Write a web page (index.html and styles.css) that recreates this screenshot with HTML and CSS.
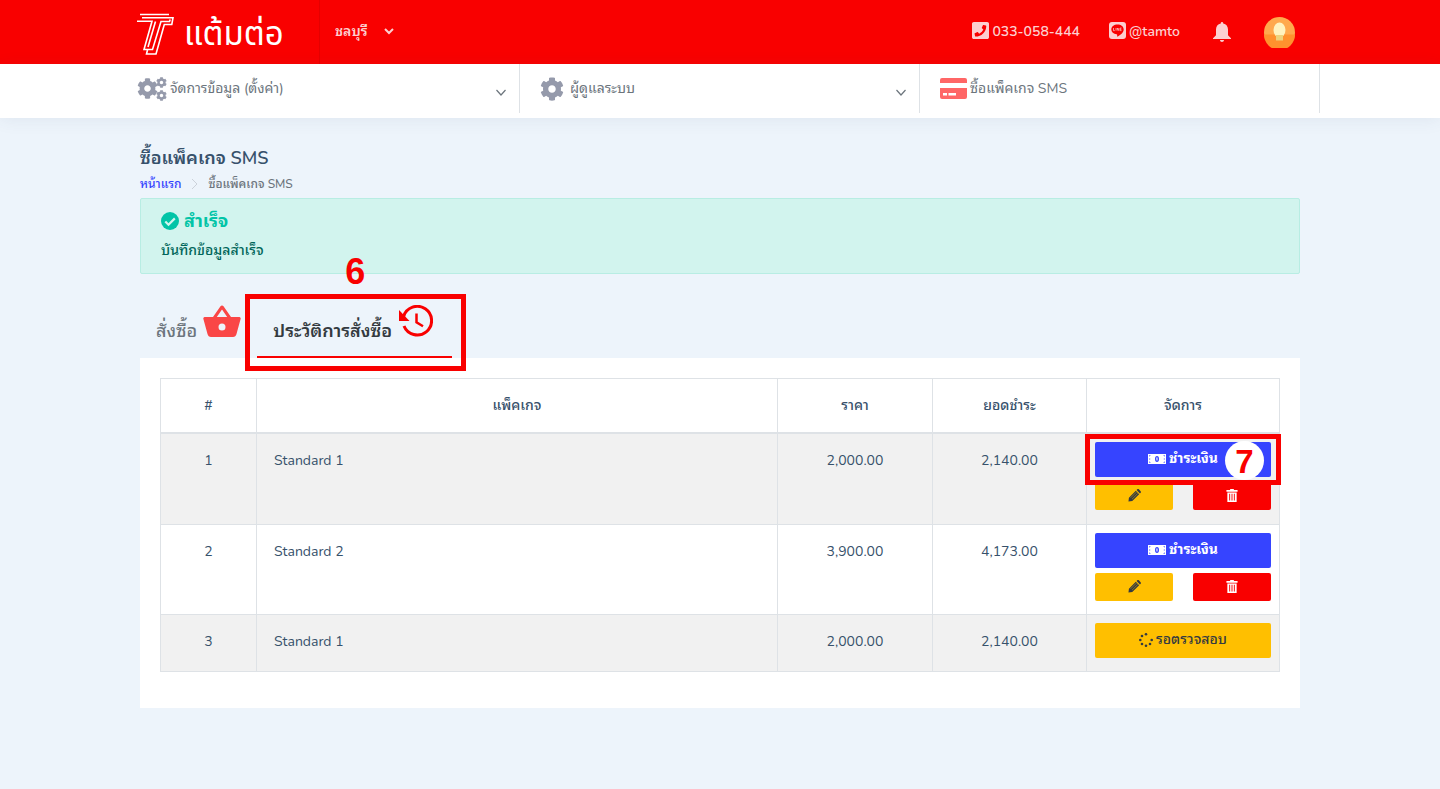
FILE: index.html
```html
<!DOCTYPE html>
<html lang="th">
<head>
<meta charset="utf-8">
<meta name="viewport" content="width=device-width, initial-scale=1">
<title>ซื้อแพ็คเกจ SMS</title>
<link rel="stylesheet" href="styles.css">
</head>
<body>
<svg class="defs" aria-hidden="true">
  <symbol id="cog" viewBox="0 0 512 512"><path d="M487.4 315.7l-42.600-24.600c4.300-23.200 4.300-47 0-70.200l42.600-24.600c4.900-2.800 7.100-8.600 5.500-14-11.100-35.600-30-67.800-54.700-94.600-3.800-4.100-10-5.100-14.800-2.300L380.800 110c-17.900-15.400-38.500-27.300-60.800-35.100V25.800c0-5.600-3.900-10.500-9.400-11.700-36.700-8.200-74.300-7.800-109.200 0-5.500 1.200-9.400 6.100-9.400 11.700V75c-22.200 7.900-42.800 19.800-60.800 35.100L88.700 85.500c-4.900-2.800-11-1.900-14.800 2.300-24.700 26.700-43.600 58.900-54.700 94.600-1.700 5.400.6 11.200 5.500 14L67.300 221c-4.300 23.200-4.300 47 0 70.200l-42.600 24.600c-4.900 2.800-7.100 8.600-5.500 14 11.100 35.600 30 67.800 54.700 94.600 3.800 4.100 10 5.100 14.800 2.300l42.600-24.600c17.900 15.400 38.500 27.300 60.800 35.100v49.200c0 5.600 3.900 10.500 9.400 11.700 36.700 8.200 74.300 7.800 109.200 0 5.500-1.200 9.400-6.100 9.400-11.700v-49.200c22.200-7.900 42.800-19.800 60.800-35.100l42.600 24.600c4.900 2.800 11 1.900 14.800-2.300 24.700-26.700 43.600-58.900 54.700-94.600 1.500-5.500-.7-11.300-5.600-14.100zM256 336c-44.100 0-80-35.900-80-80s35.900-80 80-80 80 35.900 80 80-35.900 80-80 80z"/></symbol>
  <symbol id="cash" viewBox="0 0 18 10"><path fill-rule="evenodd" d="M0 0h18v10H0zM1.200 1.200v1.600l1.600-1.600zM15.200 1.200l1.600 1.600V1.200zM1.200 7.200v1.600h1.600zM16.800 7.200l-1.600 1.600h1.600zM1.200 4.400v1.200h1V4.400zM15.800 4.400v1.200h1V4.400zM9 2a2 3 0 1 0 0 6 2 3 0 0 0 0-6zM8.300 3.500h1.200v3h-1z"/></symbol>
  <symbol id="pencil" viewBox="0 0 14 14"><path d="M1 9.400 8.400 2l3.600 3.600L4.600 13 .5 13.500zM9.200 1.200l.8-.8c.5-.5 1.200-.5 1.700 0l1.900 1.900c.5.500.5 1.200 0 1.700l-.8.800z"/><path d="m2.800 9.500 6.200-6.200M4.300 11l6.200-6.200" stroke="#ffbf00" stroke-width=".5"/></symbol>
  <symbol id="trash" viewBox="0 0 12 14"><path fill-rule="evenodd" d="M4 0h4v1.200h4V3H0V1.200h4zM1 3.800h10V14H1zM3 5v7.500h1V5zm2.500 0v7.500h1V5zM8 5v7.500h1V5z"/></symbol>
</svg>

<header class="topbar">
  <div class="wrap topbar-row">
    <a class="brand" href="#" aria-label="แต้มต่อ">
      <svg class="brand-mark" viewBox="0 0 39 43" aria-hidden="true"><g fill="none" stroke="#fff" stroke-width="1.600"><path d="M4 1.500h29M6 4.800h31l-1.200 6.700h-7.500L20 41h-9.500l1-4"/><path d="M1 8.300h15L8 36.500h8.500l8.500-28h8.500l.7-2"/><path d="M19.500 8.500 12 34"/></g></svg>
      <span class="brand-name">แต้มต่อ</span>
    </a>
    <button class="branch" type="button">ชลบุรี
      <svg viewBox="0 0 10 7" width="10" height="7" aria-hidden="true"><path d="m1 1 4 4 4-4" fill="none" stroke="currentColor" stroke-width="2"/></svg>
    </button>
    <nav class="contact" aria-label="ติดต่อ">
      <a class="phone" href="tel:033058444"><svg viewBox="0 0 448 448" width="17" height="17" aria-hidden="true"><path fill="currentColor" fill-rule="evenodd" d="M400 0H48C21.500 0 0 21.500 0 48v352c0 26.500 21.500 48 48 48h352c26.500 0 48-21.500 48-48V48c0-26.500-21.500-48-48-48zM94 384c-6 0-11-4-12-9l-15-65c-1-6 1-11 7-14l70-30c5-2 11-1 14 4l31 37c49-23 87-63 110-109l-37-31c-4-3-6-9-4-14l30-70c2-5 8-8 14-7l65 15c5 1 9 6 9 12 0 160-129 281-282 281z"/></svg>033-058-444</a>
      <a class="line" href="#"><svg viewBox="0 0 17 17" width="17" height="17" aria-hidden="true"><rect width="17" height="17" rx="3" fill="currentColor"/><path fill="#f90000" d="M8.500 2.500c-3.500 0-6.200 2.100-6.200 4.900 0 2.500 2.200 4.500 5.300 4.900.7.100.7.700.5 1.900 0 .3.300.4.700.2 3-1.700 5.900-4.300 5.900-7 0-2.800-2.700-4.900-6.200-4.900z"/><path d="M4.500 6v2.600h1.300M7 6v2.600M8.300 8.600V6l1.500 2.600V6M12.500 6h-1.300v2.600h1.300M11.200 7.300h1.200" fill="none" stroke="currentColor" stroke-width=".7"/></svg>@tamto</a>
      <button class="bell" type="button" aria-label="การแจ้งเตือน"><svg viewBox="0 0 18 20" width="18" height="20" aria-hidden="true"><path fill="currentColor" d="M9 0c.8 0 1.200.6 1.200 1.400C13.300 2 15 4.400 15 7.500v5.700l3 3V17H0v-.8l3-3V7.500c0-3.100 1.700-5.500 4.800-6.100C7.800.6 8.200 0 9 0zM7 18h4c0 1.200-.9 2-2 2s-2-.8-2-2z"/></svg></button>
      <button class="avatar" type="button" aria-label="บัญชีผู้ใช้"><svg viewBox="0 0 31 31" width="31" height="31" aria-hidden="true"><circle cx="15.500" cy="15.500" r="15.500" fill="#ffa94d"/><path d="M0 17.500h31A15.500 15.500 0 0 1 0 17.500" fill="#ff922e"/><ellipse cx="15.500" cy="13" rx="6" ry="7.500" fill="#fff3bf"/><path d="M12 18h7v5.500h-7z" fill="#eed27b"/></svg></button>
    </nav>
  </div>
</header>

<nav class="menu" aria-label="เมนูหลัก">
  <div class="menu-row">
    <a class="menu-item" href="#"><svg viewBox="0 0 30 24" width="30" height="24" fill="#959aab" aria-hidden="true"><use href="#cog" x="0" y="1" width="21" height="21"/><use href="#cog" x="19" y="0" width="11" height="11"/><use href="#cog" x="19" y="13" width="11" height="11"/></svg><span>จัดการข้อมูล (ตั้งค่า)</span><svg class="chev" viewBox="0 0 10 7" width="10" height="7" aria-hidden="true"><path d="m.5 1 4.500 5 4.500-5" fill="none" stroke="currentColor" stroke-width="1.200"/></svg></a>
    <a class="menu-item" href="#"><svg viewBox="0 0 24 24" width="24" height="24" fill="#959aab" aria-hidden="true"><use href="#cog" width="24" height="24"/></svg><span class="gap">ผู้ดูแลระบบ</span><svg class="chev" viewBox="0 0 10 7" width="10" height="7" aria-hidden="true"><path d="m.5 1 4.500 5 4.500-5" fill="none" stroke="currentColor" stroke-width="1.200"/></svg></a>
    <a class="menu-item" href="#"><svg viewBox="0 0 27 21" width="27" height="21" aria-hidden="true"><path fill="#ff6666" d="M2 0h23a2 2 0 0 1 2 2v3H0V2a2 2 0 0 1 2-2zM0 10h27v9a2 2 0 0 1-2 2H2a2 2 0 0 1-2-2z"/><path fill="#fff" d="M3 15h4v2.500H3zM8.500 15H16v2.500H8.500z"/></svg><span>ซื้อแพ็คเกจ SMS</span></a>
  </div>
</nav>

<main class="wrap">
  <h1>ซื้อแพ็คเกจ SMS</h1>
  <nav class="crumbs" aria-label="breadcrumb"><a href="#">หน้าแรก</a><svg viewBox="0 0 7 12" width="7" height="12" aria-hidden="true"><path d="m1 1 5 5-5 5" fill="none" stroke="#ccd2da"/></svg><span>ซื้อแพ็คเกจ SMS</span></nav>

  <section class="alert" role="status">
    <h2><svg viewBox="0 0 18 18" width="18" height="18" aria-hidden="true"><circle cx="9" cy="9" r="9" fill="#02c4a7"/><path d="m4.300 9.500 3.200 3.200 6.300-6.300" fill="none" stroke="#d2f4ee" stroke-width="2.200"/></svg>สำเร็จ</h2>
    <p>บันทึกข้อมูลสำเร็จ</p>
  </section>

  <div class="tabs">
    <a class="tab" href="#"><span>สั่งซื้อ</span><svg viewBox="0 0 38 32" width="38" height="32" aria-hidden="true"><path fill="#fa4646" fill-rule="evenodd" d="M2 12h8L17.500 1.200a1.800 1.800 0 0 1 3 0L28 12h8c1 0 2 .8 1.600 2L33.500 29c-.5 1.700-1.700 3-3.500 3H8c-1.800 0-3-1.300-3.500-3L.4 14C0 12.800 1 12 2 12zm11.800 0h10.400L19 4.500zM19 18.500a3.500 3.500 0 1 0 0 7 3.500 3.500 0 0 0 0-7z"/></svg></a>
    <a class="tab active" href="#" aria-current="page"><span>ประวัติการสั่งซื้อ</span><svg viewBox="0 0 34 32" width="34" height="32" aria-hidden="true"><g fill="none" stroke="#f90000" stroke-width="3"><path d="M4.600 11.500A14.300 14.300 0 1 1 5 21"/><path d="M17.500 8.500v8.800l6.500 4" stroke-width="2.500"/></g><path d="M0 5v11h10.500z" fill="#f90000"/></svg>
      <span class="mark-box mark-six"></span><span class="six">6</span></a>
  </div>

  <section class="card">
    <table>
      <colgroup><col class="c-no"><col class="c-name"><col class="c-price"><col class="c-total"><col class="c-act"></colgroup>
      <thead><tr><th>#</th><th>แพ็คเกจ</th><th>ราคา</th><th>ยอดชำระ</th><th>จัดการ</th></tr></thead>
      <tbody>
        <tr><td>1</td><td class="name">Standard 1</td><td>2,000.00</td><td>2,140.00</td>
          <td class="act"><button class="btn pay" type="button"><svg width="18" height="10" aria-hidden="true"><use href="#cash"/></svg>ชำระเงิน</button>
            <div class="pair"><button class="btn edit" type="button" aria-label="แก้ไข"><svg width="13" height="13" aria-hidden="true"><use href="#pencil"/></svg></button><button class="btn del" type="button" aria-label="ลบ"><svg width="12" height="13" aria-hidden="true"><use href="#trash"/></svg></button></div>
            <span class="mark-box mark-seven"></span><span class="seven">7</span></td></tr>
        <tr><td>2</td><td class="name">Standard 2</td><td>3,900.00</td><td>4,173.00</td>
          <td class="act"><button class="btn pay" type="button"><svg width="18" height="10" aria-hidden="true"><use href="#cash"/></svg>ชำระเงิน</button>
            <div class="pair"><button class="btn edit" type="button" aria-label="แก้ไข"><svg width="13" height="13" aria-hidden="true"><use href="#pencil"/></svg></button><button class="btn del" type="button" aria-label="ลบ"><svg width="12" height="13" aria-hidden="true"><use href="#trash"/></svg></button></div></td></tr>
        <tr><td>3</td><td class="name">Standard 1</td><td>2,000.00</td><td>2,140.00</td>
          <td class="act"><button class="btn wait" type="button"><svg viewBox="0 0 14 14" width="14" height="14" aria-hidden="true"><circle cx="7" cy="1.300" r="1.300"/><circle cx="3" cy="3" r="1.300"/><circle cx="1.300" cy="7" r="1.300"/><circle cx="3" cy="11" r="1.300"/><circle cx="7" cy="12.700" r="1.300"/><circle cx="11" cy="11" r="1.300"/><circle cx="12.700" cy="7" r="1.300"/></svg>รอตรวจสอบ</button></td></tr>
      </tbody>
    </table>
  </section>
</main>
</body>
</html>
```
FILE: styles.css
```css
* { box-sizing: border-box; }
body { margin: 0; min-height: 100vh; background: #edf4fb; color: #37516b; font: 14px/20px Nunito, "Noto Sans Thai Looped", "Noto Sans", "Noto Sans Thai", sans-serif; }
a { color: inherit; text-decoration: none; }
button { border: 0; padding: 0; background: none; color: inherit; font: inherit; cursor: pointer; }
svg { flex: none; }
.defs { position: absolute; width: 0; height: 0; }
.wrap { max-width: 1200px; margin: 0 auto; padding: 0 20px; }

.topbar { background: #f90000; color: #fccfd0; font-weight: 600; }
.topbar-row { display: flex; align-items: center; height: 64px; }
.brand { display: flex; align-items: center; gap: 9px; width: 180px; height: 64px; color: #fff; border-right: 1px solid #e50000; }
.brand-mark { width: 39px; height: 43px; margin: 4px 0 0 -4px; }
.brand-name { padding-top: 6px; font: 400 33px/48px "Noto Sans Thai", "Noto Sans", sans-serif; }
.branch { display: flex; align-items: center; gap: 17px; margin-left: 15px; }
.branch svg { margin-bottom: 2px; }
.contact { display: flex; align-items: center; margin-left: auto; padding-right: 5px; }
.contact a { display: flex; align-items: center; gap: 3px; margin-right: 29px; }
.contact a svg { margin-bottom: 3px; }
.contact .line { margin-right: 33px; }
.bell { display: flex; margin-right: 33px; }
.avatar { display: flex; }

.menu { height: 54px; background: #fff; color: #6c757d; box-shadow: 0 2px 16px rgba(60, 80, 110, .08); }
.menu-row { display: grid; grid-template-columns: repeat(3, 1fr); max-width: 1200px; margin: 0 auto; }
.menu-item { display: flex; align-items: center; gap: 3px; height: 49px; padding: 0 13px 0 20px; border-right: 1px solid #dee2e6; }
.menu-item:first-child { padding-left: 17px; }
.gap { margin-left: 3px; }
.chev { margin: 8px 0 0 auto; }

h1 { margin: 28px 0 0; font-size: 18px; line-height: 24px; font-weight: 600; }
.crumbs { display: flex; align-items: center; gap: 10px; height: 28px; font-size: 12px; font-weight: 500; color: #6c757d; }
.crumbs a { color: #3644ff; }
.alert { min-height: 76px; padding: 10px 20px; background: #d2f4ee; border: 1px solid #b8ede3; border-radius: 2px; color: #01665a; font-weight: 500; }
.alert h2 { display: flex; align-items: center; gap: 5px; margin: 0; font-size: 18px; line-height: 24px; color: #02c4a7; }
.alert p { margin: 8px 0 0; }

.tabs { display: flex; align-items: flex-end; margin-top: 26px; height: 58px; }
.tab { position: relative; display: flex; align-items: flex-start; height: 58px; padding: 5px 16px 0 16px; gap: 6px; font-size: 18px; line-height: 24px; font-weight: 500; color: #6c757d; }
.tab span { padding-top: 14px; }
.tab.active { width: 195px; gap: 7px; color: #343a40; font-weight: 600; border-bottom: 2px solid #f90000; }
.mark-box { position: absolute; border: 5px solid #f90000; }
.mark-six { inset: -6px -14px -15px -12px; }
.tab .six { position: absolute; left: 88px; top: -50px; padding: 0; color: #f90000; font: 700 36px/44px "Liberation Sans", sans-serif; }

.card { padding: 20px 20px 36px; background: #fff; }
table { width: 100%; table-layout: fixed; border-collapse: collapse; }
.c-no { width: 96px; }
.c-price { width: 155px; }
.c-total { width: 154px; }
.c-act { width: 193px; }
th, td { border: 1px solid #dee2e6; text-align: center; }
th { height: 54px; padding: 2px 0 0; font-weight: 500; border-bottom-width: 2px; }
td { padding: 17px 8px; vertical-align: top; font-weight: 400; }
tbody tr:nth-child(odd) { background: #f1f1f1; }
td.name { padding-left: 17px; text-align: left; }
td.act { position: relative; padding: 8px 8px 13px; }
tbody tr:first-child .act { padding-bottom: 14px; }
.btn { display: flex; align-items: center; justify-content: center; gap: 3px; width: 100%; height: 35px; border-radius: 2px; font-weight: 700; }
.btn svg { fill: currentColor; }
.pay { background: #3644ff; color: #fff; }
.wait, .edit { background: #ffbf00; color: #343a40; }
.wait { font-weight: 500; }
.pair { display: flex; gap: 20px; margin-top: 5px; }
.pair .btn { flex: 1; height: 28px; }
.del { background: #f90000; color: #fff; }
.mark-seven { top: 0; left: -2px; right: -2px; height: 51px; }
.seven { position: absolute; top: 7px; right: 15px; width: 39px; height: 39px; border-radius: 50%; background: #fff; color: #f90000; font: 700 33px/41px "Liberation Sans", sans-serif; }
```
